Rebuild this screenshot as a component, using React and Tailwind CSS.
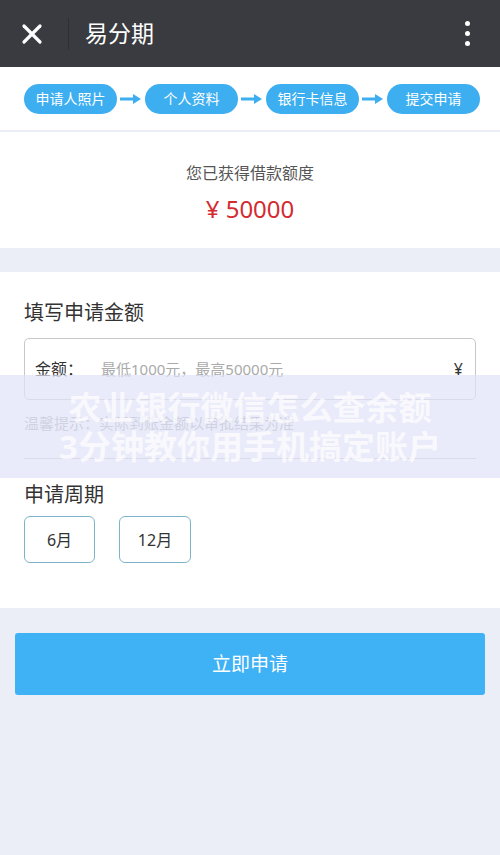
import { X } from "lucide-react";

const steps = ["申请人照片", "个人资料", "银行卡信息", "提交申请"];

const Arrow = () => (
  <svg width="22" height="12" viewBox="0 0 22 12" className="shrink-0">
    <rect x="0" y="4.5" width="14" height="3" fill="#3daef0" />
    <path d="M13 1 L21 6 L13 11 Z" fill="#3daef0" />
  </svg>
);

export default function App() {
  return (
    <div
      className="relative w-[500px] h-[855px] bg-[#ebeef6] overflow-hidden"
      style={{ fontFamily: '"Noto Sans", "Noto Sans CJK SC", sans-serif' }}
    >
      {/* 顶部导航 */}
      <div className="h-[67px] bg-[#3a3b40] flex items-center">
        <div className="w-[68px] flex justify-center pr-1">
          <X className="w-8 h-8 text-white" strokeWidth={2.4} />
        </div>
        <div className="w-px h-[32px] bg-[#2e2f33]" />
        <span className="ml-[16px] text-white text-[23px] flex-1">易分期</span>
        <div className="w-[66px] flex flex-col items-center gap-[5px]">
          <span className="w-[5px] h-[5px] rounded-full bg-white" />
          <span className="w-[5px] h-[5px] rounded-full bg-white" />
          <span className="w-[5px] h-[5px] rounded-full bg-white" />
        </div>
      </div>

      {/* 步骤 */}
      <div className="h-[63px] bg-white flex items-center px-[24px] gap-[3px]">
        {steps.map((s, i) => (
          <div key={s} className="flex items-center gap-[3px]">
            <div className="w-[93px] h-[30px] rounded-full bg-[#3daef0] text-white text-[14px] flex items-center justify-center">
              {s}
            </div>
            {i < steps.length - 1 && <Arrow />}
          </div>
        ))}
      </div>

      {/* 额度 */}
      <div className="mt-[2px] h-[116px] bg-white flex flex-col items-center pt-[29px]">
        <p className="text-[16px] text-[#555] leading-[24px]">您已获得借款额度</p>
        <p className="mt-[8px] text-[24px] text-[#d42a32] leading-[32px]">¥ 50000</p>
      </div>

      {/* 申请表 */}
      <div className="mt-[24px] h-[336px] bg-white px-[24px] pt-[27px]">
        <h2 className="text-[20px] text-[#333] leading-[28px]">填写申请金额</h2>
        <div className="mt-[11px] h-[62px] border border-[#c8c8cc] rounded-[5px] flex items-center px-[10px]">
          <span className="text-[16px] text-[#333] w-[66px]">金额：</span>
          <span className="text-[15px] text-[#aaa] flex-1">最低1000元，最高50000元</span>
          <span className="text-[16px] text-[#333] mr-[2px]">¥</span>
        </div>
        <p className="mt-[12px] text-[15px] text-[#aaa] leading-[22px]">温馨提示：实际到账金额以审批结果为准</p>
        <div className="mt-[24px] h-px bg-[#c8c8cc]" />
        <h2 className="mt-[22px] text-[20px] text-[#333] leading-[28px]">申请周期</h2>
        <div className="mt-[7px] flex gap-[24px]">
          <div className="w-[71px] h-[47px] border border-[#7fb3c9] rounded-[6px] flex items-center justify-center text-[16px] text-[#333]">
            6月
          </div>
          <div className="w-[72px] h-[47px] border border-[#7fb3c9] rounded-[6px] flex items-center justify-center text-[16px] text-[#333]">
            12月
          </div>
        </div>
      </div>

      {/* 按钮 */}
      <div className="px-[15px] pt-[25px]">
        <div className="h-[62px] rounded-[3px] bg-[#3fb1f5] flex items-center justify-center text-white text-[19px]">
          立即申请
        </div>
      </div>

      {/* 水印条 */}
      <div className="absolute left-0 right-0 top-[375px] h-[103px] bg-[#dfe2f8]/70 flex flex-col items-center justify-center">
        <p className="text-[33px] font-bold text-white/70 leading-[39px]">农业银行微信怎么查余额</p>
        <p className="text-[33px] font-bold text-white/70 leading-[39px]">3分钟教你用手机搞定账户</p>
      </div>
    </div>
  );
}
